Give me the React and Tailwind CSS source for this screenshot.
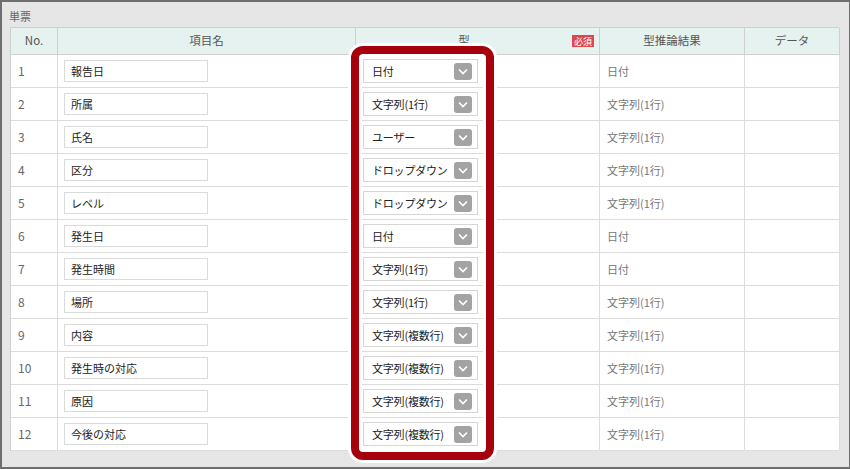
const rows = [
  ['1', '報告日', '日付', '日付'],
  ['2', '所属', '文字列(1行)', '文字列(1行)'],
  ['3', '氏名', 'ユーザー', '文字列(1行)'],
  ['4', '区分', 'ドロップダウン', '文字列(1行)'],
  ['5', 'レベル', 'ドロップダウン', '文字列(1行)'],
  ['6', '発生日', '日付', '日付'],
  ['7', '発生時間', '文字列(1行)', '日付'],
  ['8', '場所', '文字列(1行)', '文字列(1行)'],
  ['9', '内容', '文字列(複数行)', '文字列(1行)'],
  ['10', '発生時の対応', '文字列(複数行)', '文字列(1行)'],
  ['11', '原因', '文字列(複数行)', '文字列(1行)'],
  ['12', '今後の対応', '文字列(複数行)', '文字列(1行)'],
];

const cols = 'grid grid-cols-[47px_298px_244px_145px_95px]';

function SelectBox({ value }) {
  return (
    <div className="ml-[7px] flex h-[24px] w-[115px] items-center justify-between border border-[#d6d6d6] bg-white pl-[8px] pr-[5px] text-[11px] tracking-[-0.2px] text-[#222]">
      <span className="whitespace-nowrap">{value}</span>
      <span className="flex h-[17px] w-[18px] shrink-0 items-center justify-center rounded-[3px] bg-[#a3a3a3]">
        <svg width="10" height="7" viewBox="0 0 10 7">
          <polyline points="1,1.5 5,5.5 9,1.5" fill="none" stroke="#fff" strokeWidth="1.6" />
        </svg>
      </span>
    </div>
  );
}

export default function App() {
  return (
    <div
      className="relative h-[470px] w-[850px] overflow-hidden bg-white"
      style={{ fontFamily: '"Noto Sans CJK JP", "Noto Sans", sans-serif' }}
    >
      <div className="h-[469px] w-[851px] border-2 border-[#6e6e6e] bg-[#e6e6e6]">
        <div className="h-[25px] pl-[7px] pt-[7px] text-[11px] leading-[14px] text-[#666]">単票</div>

        <div className="ml-[8px] w-[829px] border-l border-t border-[#cfcfcf]">
          {/* header */}
          <div className={`${cols} h-[27px] bg-[#e5f2ef] text-[11.5px] text-[#555]`}>
            <div className="flex items-center justify-center border-b border-r border-[#cfcfcf]">No.</div>
            <div className="flex items-center justify-center border-b border-r border-[#cfcfcf]">項目名</div>
            <div className="flex items-center border-b border-r border-[#cfcfcf] pr-[5px]">
              <span className="flex-1 text-center">型</span>
              <span className="flex h-[12px] items-center bg-[#e0474c] px-[2px] text-[9px] leading-none text-white">必須</span>
            </div>
            <div className="flex items-center justify-center border-b border-r border-[#cfcfcf]">型推論結果</div>
            <div className="flex items-center justify-center border-b border-r border-[#cfcfcf]">データ</div>
          </div>

          {/* body */}
          {rows.map(([no, name, type, guess]) => (
            <div key={no} className={`${cols} h-[33px] bg-white text-[11px]`}>
              <div className="flex items-center border-b border-r border-[#dcdcdc] pl-[7px] text-[12px] text-[#666]">{no}</div>
              <div className="flex items-center border-b border-r border-[#dcdcdc]">
                <div className="ml-[6px] flex h-[22px] w-[144px] items-center border border-[#dadada] pl-[6px] text-[#222]">
                  {name}
                </div>
              </div>
              <div className="flex items-center border-b border-r border-[#dcdcdc]">
                <SelectBox value={type} />
              </div>
              <div className="flex items-center border-b border-r border-[#dcdcdc] pl-[7px] text-[#777]">{guess}</div>
              <div className="border-b border-r border-[#dcdcdc]" />
            </div>
          ))}
        </div>
      </div>

      {/* annotation highlight */}
      <div className="absolute left-[351px] top-[46px] h-[414px] w-[143px] rounded-[12px] border-[8px] border-[#a5000b] shadow-[0_0_0_3px_#fff,inset_0_0_0_3px_#fff]" />
    </div>
  );
}
